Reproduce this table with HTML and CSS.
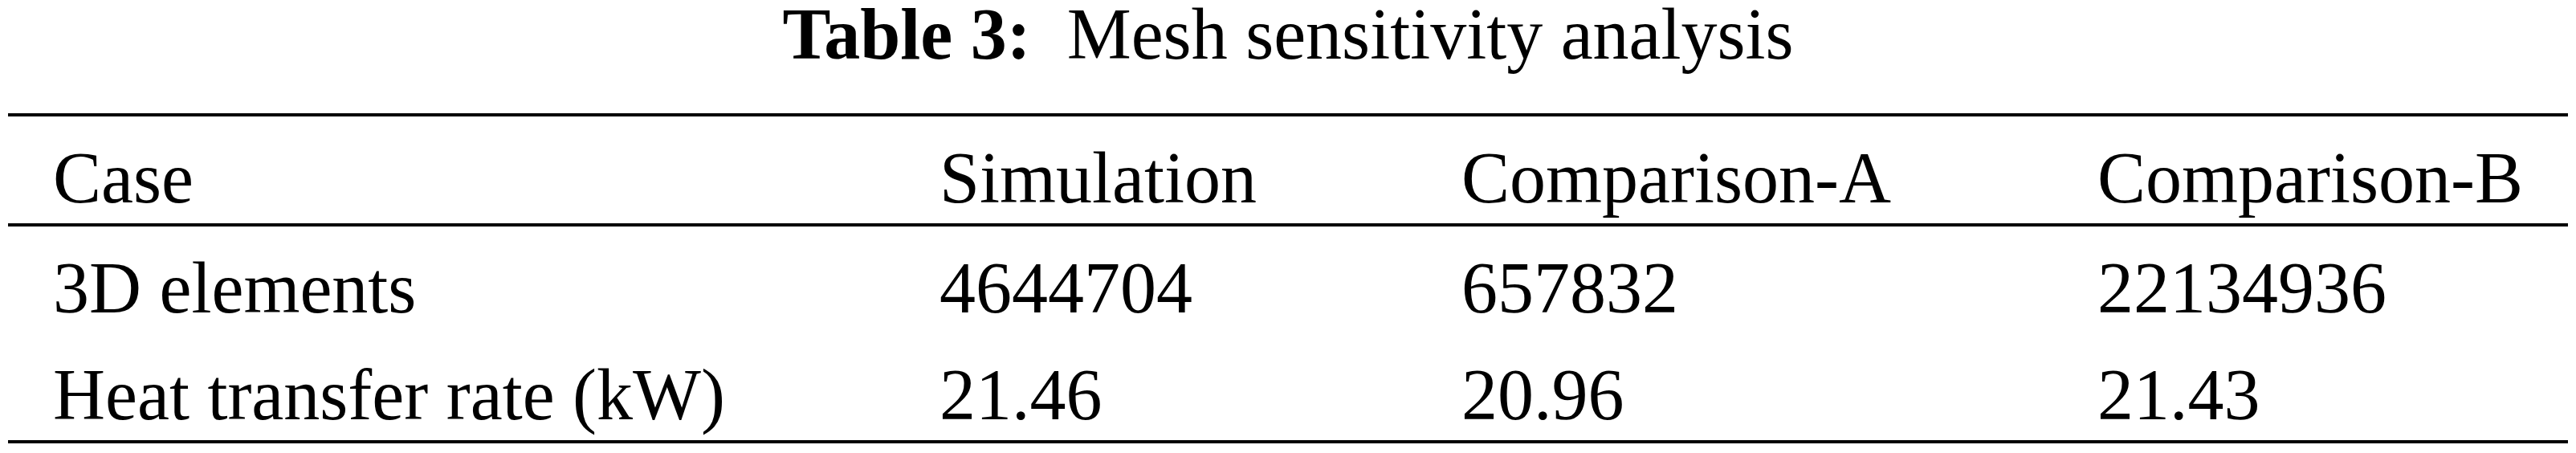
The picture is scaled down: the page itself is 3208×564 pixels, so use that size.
FILE: index.html
```html
<!DOCTYPE html>
<html lang="en">
<head>
  <meta charset="UTF-8">
  <title>Mesh sensitivity analysis</title>
  <link rel="stylesheet" href="styles.css">
</head>
<body>

  <table class="mesh-table">
    <caption><b>Table 3:</b>&nbsp; Mesh sensitivity analysis</caption>
    <colgroup>
      <col class="col-case">
      <col class="col-sim">
      <col class="col-a">
      <col class="col-b">
    </colgroup>
    <thead>
      <tr>
        <th>Case</th>
        <th>Simulation</th>
        <th>Comparison-A</th>
        <th>Comparison-B</th>
      </tr>
    </thead>
    <tbody>
      <tr>
        <td>3D elements</td>
        <td>4644704</td>
        <td>657832</td>
        <td>22134936</td>
      </tr>
      <tr>
        <td>Heat transfer rate (kW)</td>
        <td>21.46</td>
        <td>20.96</td>
        <td>21.43</td>
      </tr>
    </tbody>
  </table>

</body>
</html>
```

FILE: styles.css
```css
body {
  font-family: "Liberation Serif", "Times New Roman", serif;
  margin: 0;
  background-color: #fff;
  color: #000;
}

.mesh-table {
  width: 3188px;
  margin-left: 10px;
  border-collapse: collapse;
  table-layout: fixed;
  font-size: 90px;
}

.mesh-table caption {
  font-size: 90px;
  line-height: 86px;
  text-align: center;
  padding-bottom: 55px;
}

.col-case { width: 1104px; }
.col-sim  { width: 650px; }
.col-a    { width: 792px; }
.col-b    { width: 642px; }

.mesh-table thead tr {
  border-top: 4px solid #000;
  border-bottom: 4px solid #000;
}

.mesh-table tbody tr:last-child {
  border-bottom: 4px solid #000;
}

.mesh-table th,
.mesh-table td {
  font-weight: normal;
  text-align: left;
  line-height: 90px;
  padding: 32px 0 11px 56px;
  white-space: nowrap;
}
```
